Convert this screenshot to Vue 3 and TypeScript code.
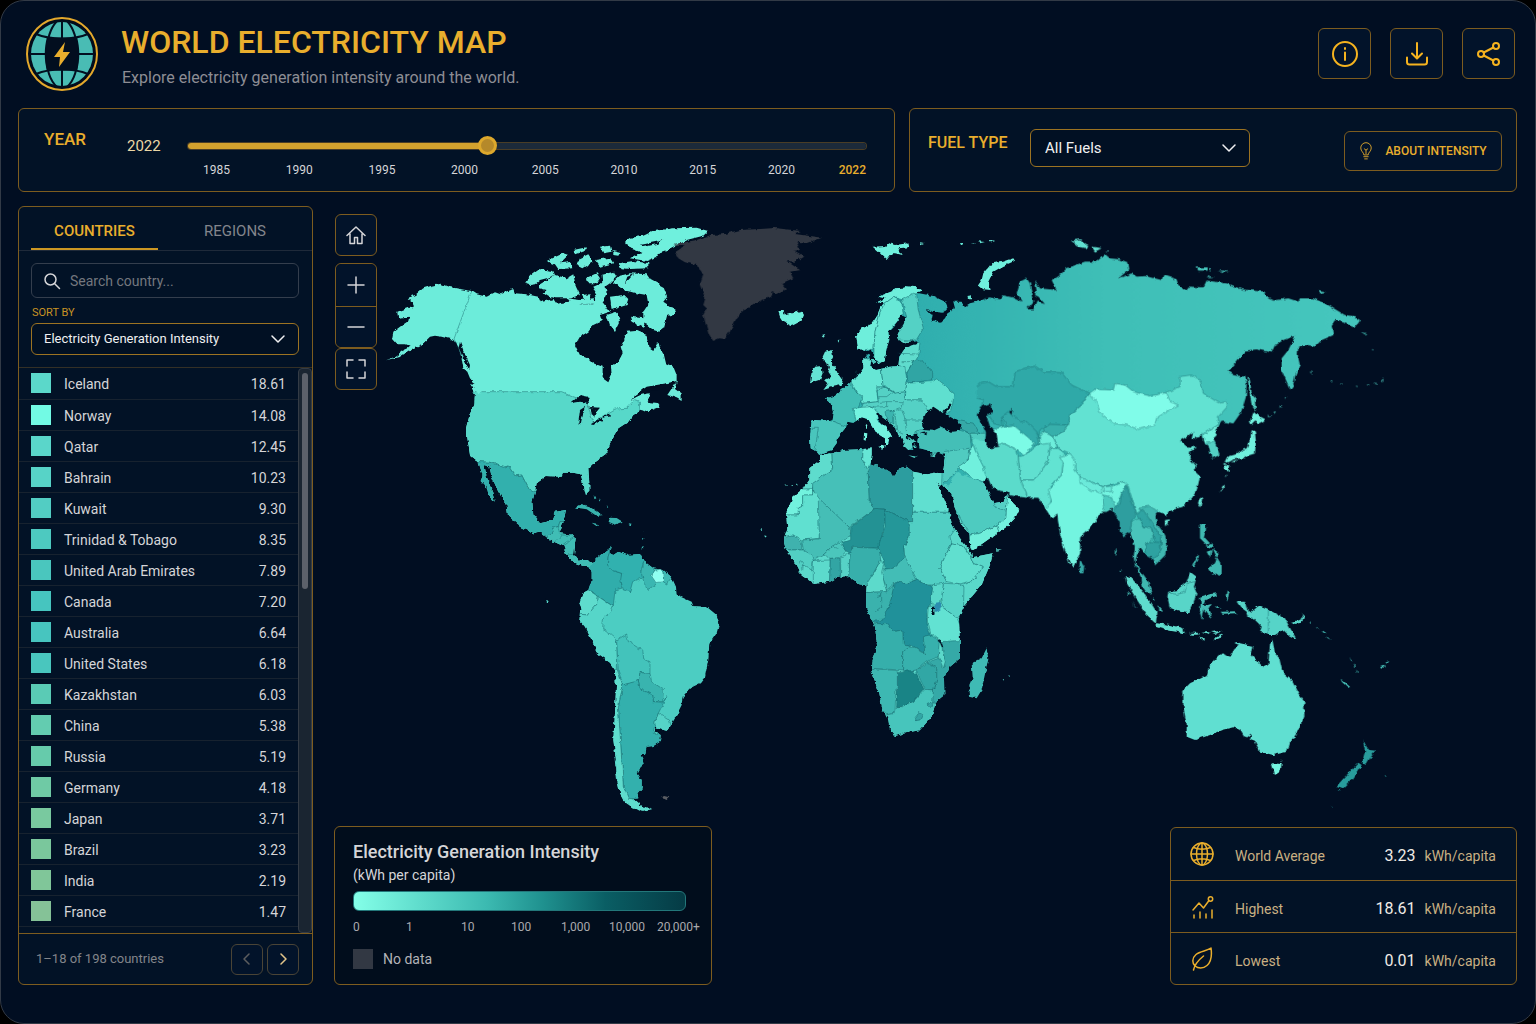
<script setup lang="ts">
import { computed, ref } from 'vue'

interface Country {
  name: string
  value: string
  color: string
}

/** [fill, outline] of one coloured area */
type Area = [string, string]

interface MapRegion {
  id: string
  x: number
  y: number
  land: string
  base: string
  areas: Area[]
  borders?: string
  islands: Area[]
  water?: string
}

const countries: Country[] = [
  { name: 'Iceland', value: '18.61', color: '#5bd8ca' },
  { name: 'Norway', value: '14.08', color: '#72fae4' },
  { name: 'Qatar', value: '12.45', color: '#5ad6ca' },
  { name: 'Bahrain', value: '10.23', color: '#57d3c7' },
  { name: 'Kuwait', value: '9.30', color: '#52cdc3' },
  { name: 'Trinidad & Tobago', value: '8.35', color: '#4dc9c0' },
  { name: 'United Arab Emirates', value: '7.89', color: '#4ac6be' },
  { name: 'Canada', value: '7.20', color: '#46c5bf' },
  { name: 'Australia', value: '6.64', color: '#47c5bf' },
  { name: 'United States', value: '6.18', color: '#49c6be' },
  { name: 'Kazakhstan', value: '6.03', color: '#5acbb5' },
  { name: 'China', value: '5.38', color: '#63ccb0' },
  { name: 'Russia', value: '5.19', color: '#66cbab' },
  { name: 'Germany', value: '4.18', color: '#6fcaa5' },
  { name: 'Japan', value: '3.71', color: '#79c99f' },
  { name: 'Brazil', value: '3.23', color: '#7ac79c' },
  { name: 'India', value: '2.19', color: '#80c699' },
  { name: 'France', value: '1.47', color: '#85c297' },
]

const years = [1985, 1990, 1995, 2000, 2005, 2010, 2015, 2020, 2022]
const scaleLabels = ['0', '1', '10', '100', '1,000', '10,000', '20,000+']

const position = ref(44)
const trackStyle = computed(() => ({ '--fill': `${position.value}%` }))
const fuel = ref('All Fuels')
const sortBy = ref('Electricity Generation Intensity')
const search = ref('')
const tab = ref('countries')

const regions: MapRegion[] = [
  {
    id: 'north-america',
    x: 380,
    y: 215,
    base: '#6cecda',
    land: 'M18,436L45,425 70,405 92,395 75,388 50,388 36,372 40,350 60,335 85,318 88,305 55,308 52,290 85,278 102,280 98,262 82,248 105,240 130,220 155,212 182,206 205,215 240,222 275,228 290,238 320,245 345,232 362,238 400,222 405,235 440,238 475,245 482,262 520,252 530,266 580,258 600,268 640,268 652,235 640,215 675,200 680,235 668,262 690,290 660,300 665,318 640,330 625,350 600,365 585,390 600,420 625,430 640,445 668,455 668,490 685,502 695,480 693,455 715,440 728,415 722,395 735,370 740,350 770,347 800,360 805,395 820,405 835,380 840,400 852,420 858,445 880,455 890,480 890,498 860,505 800,515 760,545 780,540 810,535 800,560 835,565 842,575 800,592 785,585 760,600 745,620 715,640 700,665 692,680 680,715 645,740 625,760 628,805 628,830 618,840 608,800 602,778 580,773 550,773 545,785 500,783 470,805 465,830 457,860 460,900 480,925 515,917 525,890 558,885 550,920 538,955 580,960 587,970 582,1020 595,1037 625,1035 645,1047 640,1058 615,1055 585,1043 560,1020 550,993 510,975 480,950 460,955 420,935 385,905 380,870 355,830 335,785 328,753 313,750 320,785 335,825 345,863 325,840 320,815 302,795 308,780 295,740 270,720 263,675 258,640 268,600 283,570 285,535 275,520 290,515 270,490 262,470 250,460 245,430 235,395 220,375 185,365 165,362 150,365 130,385 100,400 60,425Z',
    areas: [
      ['#57d8c9', 'M200,530L545,530 580,545 620,560 640,625 665,605 705,582 740,580 765,553 778,558 780,590 850,600 700,860 600,850 465,830 445,820 425,780 405,783 385,753 370,757 330,742 295,740 200,740Z'],
      ['#32b0ad', 'M295,740L330,742 370,757 385,753 405,783 425,780 445,820 465,830 600,870 600,920 540,920 535,935 515,940 520,950 500,970 480,1000 200,1000 200,740Z'],
      ['#40bdb5', 'M540,920L535,935 515,940 520,950 500,970 500,1100 700,1100 600,920Z'],
    ],
    borders: 'M275,228L222,372 250,430M525,980L545,960 580,962M550,990L585,965M562,1020L582,1018M535,940L538,955',
    islands: [
      ['#6cecda', 'M435,205L450,180 475,162 520,168 525,180 500,190 480,195 465,208 450,210ZM480,208L525,180 560,190 580,178 588,215 600,240 570,250 530,250 505,245 490,235 500,225 480,220ZM620,188L650,175 660,190 650,205 625,205ZM500,138L550,115 565,120 540,145 575,140 580,160 535,162 525,148ZM580,105L620,97 620,105 585,118ZM600,130L625,118 640,140 610,160 590,150ZM660,95L690,92 695,110 670,115ZM645,135L690,128 700,145 660,155ZM700,105L722,110 715,122 700,120ZM715,145L760,138 805,145 805,160 750,162 725,160Z'],
      ['#6ff0dd', 'M735,80L750,68 790,62 820,48 880,40 950,38 985,48 970,62 920,75 890,90 860,105 840,112 830,125 800,138 750,130 770,118 790,115 765,105 745,98Z'],
      ['#6cecda', 'M700,200L720,182 750,175 800,178 812,195 850,215 862,245 850,260 888,285 880,300 862,302 852,340 838,350 820,345 790,320 790,290 805,268 800,240 770,235 755,230 730,225ZM665,180L700,170 710,185 690,205 668,220ZM690,245L730,240 745,255 740,270 710,280 695,285ZM680,300L710,290 720,318 705,348 690,330ZM750,305L790,310 795,340 755,320ZM862,540L890,498 885,520 905,535 905,558 890,550ZM270,505L290,508 302,530 296,538ZM248,440L262,450 258,470ZM605,240L632,238 628,255 612,252ZM560,250L600,255 640,250 645,266 580,268ZM640,225L662,205 672,235 655,250Z'],
    ],
    water: 'M572,565L600,540 625,545 630,565 600,560ZM595,625L600,585 615,575 608,600 602,628ZM620,575L660,578 650,590 645,610 635,600 632,580ZM632,628L665,608 668,614 640,630ZM665,605L695,597 690,604 670,608ZM752,555L790,522 850,512 860,520 800,530 765,548ZM735,205L742,185 760,178 748,192ZM780,90L830,80 850,72 835,86 790,96ZM236,398L240,380 256,420 270,450 268,465 250,430Z',
  },
  {
    id: 'south-america',
    x: 440,
    y: 440,
    base: '#4ccdc2',
    land: 'M450,385L460,365 475,350 490,338 515,320 510,340 520,345 535,335 560,345 600,342 610,362 640,385 670,390 695,412 708,440 710,465 755,485 760,498 800,500 830,525 838,550 830,580 808,612 805,660 795,710 780,730 750,745 728,770 725,795 705,835 690,860 680,872 650,865 645,850 645,875 662,885 660,905 640,918 620,920 615,945 600,945 610,965 592,1000 605,1020 605,1045 592,1060 595,1075 580,1078 600,1095 632,1108 610,1115 580,1105 555,1085 540,1060 530,1010 528,960 520,900 525,820 528,740 525,690 510,668 470,640 460,610 435,560 418,540 420,515 425,505 418,490 428,460 445,450 455,420 455,400Z',
    areas: [
      ['#30adab', 'M400,300L515,300 505,350 502,375 520,392 545,400 545,445 525,450 520,500 470,465 445,450 400,450Z'],
      ['#31b1af', 'M515,310L505,350 502,375 520,392 545,400 542,420 550,450 570,455 578,425 610,412 605,385 612,365 615,330Z'],
      ['#3ab6b1', 'M612,362L605,400 612,430 625,448 650,432 640,395 645,370Z'],
      ['#3fbbb4', 'M668,380L700,405 680,432 670,425Z'],
      ['#8ffff0', 'M640,392L668,385 670,425 648,428 636,410Z'],
      ['#5fdccd', 'M400,450L445,450 472,468 470,490 440,525 400,520Z'],
      ['#56d6c9', 'M472,468L520,500 515,512 490,535 488,565 515,585 530,600 532,660 532,690 400,690 400,520 440,525 470,490Z'],
      ['#43c3bb', 'M530,600L560,582 565,605 605,630 608,655 630,665 630,700 600,698 595,722 580,728 548,735 535,690 532,640Z'],
      ['#39b4af', 'M595,722L600,698 630,700 635,725 670,748 668,785 640,785 638,765 600,745Z'],
      ['#33b0ad', 'M548,735L595,722 600,745 638,765 640,785 668,787 680,770 655,820 645,850 700,900 700,1000 620,1080 565,1075 550,1040 545,960 540,880 535,800Z'],
      ['#5fdccd', 'M532,690L548,735 535,800 540,880 545,960 550,1040 565,1075 640,1085 640,1120 500,1120 500,690Z'],
      ['#55d3c7', 'M655,820L688,840 700,880 640,880 645,850Z'],
    ],
    islands: [
      ['#38b3ae', 'M403,205L425,192 450,200 490,225 470,228 440,208 410,203ZM510,233L530,234 548,245 520,255 505,248ZM455,248L475,252 468,257ZM560,249L575,251 572,256ZM461,165L466,175 463,178ZM478,175L484,183 480,184ZM497,198L505,202 500,204ZM606,270L610,276 607,280ZM609,292L613,296 610,300ZM606,320L610,326 604,330Z'],
      ['#56d6c9', 'M318,478L326,484 322,489ZM524,955L532,975 526,980ZM526,1000L534,1015 528,1018ZM548,1072L558,1082 550,1084ZM630,1103L640,1107 632,1110Z'],
      ['#5a5d63', 'M662,1075L672,1068 688,1072 680,1080 672,1076Z'],
      ['#4ccdc2', 'M706,462L722,468 716,484 704,478Z'],
    ],
  },
  {
    id: 'greenland',
    x: 440,
    y: 215,
    base: '#323843',
    land: 'M705,112L735,92 700,88 770,75 810,60 850,58 900,45 960,42 1005,39 1083,48 1060,56 1146,68 1104,84 1070,80 1080,105 1060,108 1090,125 1065,140 1040,138 1080,165 1050,170 1060,190 1026,205 1040,222 1010,235 1000,228 990,246 945,264 906,290 890,310 880,330 870,350 855,372 838,370 820,378 805,355 798,330 790,300 800,280 790,270 796,250 780,210 790,180 770,150 735,142 715,130Z',
    areas: [],
    islands: [],
  },
  {
    id: 'africa',
    x: 760,
    y: 440,
    base: '#5bd9cb',
    land: 'M180,45L215,40 250,30 300,28 335,25 335,45 332,70 360,80 405,108 415,85 440,80 460,95 500,103 525,98 548,100 550,125 542,140 528,122 545,160 568,215 575,250 600,295 628,330 638,352 698,340 690,375 665,435 610,500 597,535 600,620 600,655 565,685 552,715 553,765 528,785 515,830 480,870 440,878 405,888 390,870 385,840 368,810 358,760 333,690 335,660 352,620 345,560 318,505 318,470 320,435 290,432 270,408 235,410 210,425 160,432 120,400 95,350 78,330 70,300 82,265 78,220 100,170 130,145 148,120 148,85 180,60ZM556,35L640,40 672,130 690,165 700,190 730,185 742,162 760,190 778,208 765,235 740,260 690,295 640,330 632,325 628,285 605,255 590,220 575,165 550,135 548,110Z',
    areas: [
      ['#5edccd', 'M140,40L215,30 218,88 160,130 158,147 100,150 100,100Z'],
      ['#72f2de', 'M60,147L158,147 158,165 128,165 128,200 115,205 115,225 60,225Z'],
      ['#46c0b8', 'M215,20L310,20 308,60 325,95 328,185 345,205 268,262 175,180 158,150 158,130 218,88Z'],
      ['#66e6d5', 'M310,20L345,20 345,60 325,95 308,60Z'],
      ['#2c9d9f', 'M325,95L332,70 350,60 458,60 458,245 445,245 375,208 345,205 328,185Z'],
      ['#60dfd0', 'M458,60L560,90 560,135 600,217 458,217Z'],
      ['#60e0d0', 'M60,225L115,225 115,205 128,200 128,165 158,165 158,150 185,185 178,295 125,300 100,285 60,300Z'],
      ['#45beb6', 'M175,183L185,183 268,262 272,285 240,310 215,320 190,345 160,362 130,330 125,300 178,297Z'],
      ['#239294', 'M272,262L345,205 375,208 375,240 358,325 280,322 270,340 245,325 248,308 272,300Z'],
      ['#249799', 'M375,208L448,245 448,290 432,320 435,350 400,385 375,388 372,360 358,335 358,310 375,260Z'],
      ['#51cfc4', 'M458,217L600,217 590,270 575,310 555,350 540,385 560,425 540,435 505,435 465,415 435,370 432,320 448,290 448,245 458,245Z'],
      ['#5ad9ca', 'M590,262L645,340 632,350 610,318 575,312 570,290Z'],
      ['#60dfcf', 'M575,312L610,318 632,350 640,370 670,382 640,420 600,432 560,425 540,385 555,350Z'],
      ['#5ad8ca', 'M632,350L720,330 700,450 600,530 610,432 640,420 670,382 640,370Z'],
      ['#56d3c7', 'M550,430L600,432 612,440 610,520 590,535 548,500 545,470Z'],
      ['#5ad8ca', 'M515,435L550,430 545,470 540,495 512,495Z'],
      ['#20919a', 'M400,435L410,425 440,430 470,418 505,435 518,440 512,490 500,510 502,560 512,585 490,600 495,640 465,622 430,610 428,570 400,575 385,555 345,550 335,540 370,535 390,490Z'],
      ['#62e2d2', 'M505,500L545,500 592,535 620,610 580,622 545,605 512,580 502,540Z'],
      ['#43bdb6', 'M372,388L400,385 435,350 470,418 440,430 410,425 380,450 368,410Z'],
      ['#5cdacb', 'M362,360L372,370 365,400 380,455 310,458 310,430 340,400Z'],
      ['#37afab', 'M280,322L358,325 362,360 340,400 315,440 285,440 265,410 270,340Z'],
      ['#32a5a4', 'M210,355L240,355 242,430 208,435Z'],
      ['#56d2c6', 'M242,352L270,340 265,420 242,420Z'],
      ['#5cdacc', 'M160,362L210,360 208,440 160,440Z'],
      ['#4bc6bc', 'M190,345L215,320 238,305 258,335 240,352 210,355Z'],
      ['#3fb2ae', 'M60,290L100,285 125,310 125,330 60,330Z'],
      ['#52cfc3', 'M60,330L130,330 155,345 160,362 155,390 130,375 115,400 80,380Z'],
      ['#3ab2ad', 'M310,458L380,455 385,450 402,435 390,490 370,540 330,545 300,500Z'],
      ['#36afab', 'M320,550L385,552 400,575 428,570 430,612 448,615 448,630 428,635 428,690 320,685Z'],
      ['#37b1ad', 'M428,635L448,622 465,622 495,642 490,590 512,585 540,605 535,650 500,665 470,690 440,695 428,690Z'],
      ['#35a9a7', 'M545,605L620,600 610,680 570,720 560,790 515,785 520,750 530,720 530,680 500,668 535,655 555,680Z'],
      ['#5bd8ca', 'M538,600L546,625 556,665 550,685 535,650Z'],
      ['#31a7a5', 'M468,692L500,670 530,680 530,720 520,750 495,748Z'],
      ['#198486', 'M412,695L455,692 468,700 492,748 460,785 425,800 410,800 412,745Z'],
      ['#3db8b2', 'M320,685L412,692 412,745 408,745 405,820 385,825 350,800Z'],
      ['#47c5bc', 'M375,825L405,820 410,800 425,800 460,785 495,748 520,750 518,790 600,780 500,900 380,900Z'],
      ['#32a5a4', 'M466,832L478,818 488,824 480,840 468,842ZM505,790L516,786 518,802 506,802Z'],
      ['#4ecbc0', 'M548,30L660,60 690,165 742,170 738,235 710,255 660,280 630,285 545,140Z'],
      ['#70efdb', 'M630,285L660,280 710,255 720,285 640,345 620,330Z'],
      ['#72f2df', 'M742,155L738,235 710,255 720,285 800,260 790,170Z'],
      ['#55d0c5', 'M700,185L744,165 738,210 710,205Z'],
    ],
    borders: 'M345,470L365,465 365,500 345,515M365,465L368,458M215,320L235,325M112,372L122,362 130,372 128,392M568,75L572,100 555,130',
    islands: [
      ['#3fbab4', 'M680,625L685,655 665,750 650,775 630,770 628,735 638,710 635,670 665,655Z'],
      ['#5bd9cb', 'M72,135L80,133 80,137ZM92,138L99,135 99,140ZM108,134L112,128 112,138ZM0,270L6,268 6,273ZM10,290L15,286 17,293ZM728,718L732,718 732,722ZM745,706L750,707 748,711ZM710,328L726,328 712,332Z'],
      ['#2b8db0', 'M522,500L530,488 545,486 542,508 526,516Z'],
    ],
    water: 'M516,500L522,500 524,524 518,522ZM536,598L542,600 550,622 546,622Z',
  },
  {
    id: 'europe',
    x: 770,
    y: 220,
    base: 'url(#russia-west)',
    land: 'M318,248L345,235 325,230 370,212 375,205 405,203 400,198 440,202 455,212 440,218 490,228 525,245 532,262 520,278 490,275 470,266 488,285 485,300 510,308 525,295 535,275 555,265 550,245 575,245 580,262 600,250 640,240 660,590 650,640 650,680 650,770 640,790 610,778 560,755 535,800 520,790 520,760 525,745 530,700 520,700 505,695 490,702 470,690 450,685 445,665 448,650 440,640 425,645 412,645 410,655 425,665 430,690 415,690 405,680 395,655 380,640 375,620 355,605 335,590 325,578 318,580 325,600 345,620 365,645 370,655 358,650 355,668 345,675 345,655 320,640 305,615 295,598 275,592 262,600 250,608 232,605 228,622 205,650 200,670 185,690 160,698 148,705 140,695 122,685 120,650 125,600 135,600 180,603 188,600 192,575 185,550 165,535 195,528 205,520 240,490 258,470 268,462 280,445 280,415 300,402 303,425 300,440 318,450 360,440 385,438 388,410 405,385 440,372 445,360 400,368 385,358 382,335 400,315 410,290 395,283 385,300 372,318 355,335 358,360 350,385 345,420 325,432 312,410 302,388 285,395 265,385 258,345 275,325 305,312 320,290 330,265 345,245Z',
    areas: [
      ['#6eeedb', 'M240,400L300,390 312,385 315,335 330,280 345,250 370,232 400,240 440,222 460,215 440,190 300,190Z'],
      ['#67e8d6', 'M312,385L315,335 330,280 345,250 370,232 395,245 400,285 360,330 360,440 312,440Z'],
      ['#54d1c5', 'M395,240L430,220 440,222 445,270 460,325 440,358 380,375 375,320 410,290Z'],
      ['#5fdccd', 'M380,360L450,365 445,415 430,425 410,455 380,445 380,400Z'],
      ['#66e6d5', 'M240,395L332,430 340,500 320,515 325,545 275,550 262,520 240,500 220,480Z'],
      ['#5bd8ca', 'M332,430L405,440 412,490 405,515 375,520 340,500Z'],
      ['#30a5a4', 'M410,460L430,425 460,422 485,455 485,480 415,490Z'],
      ['#5fdfcf', 'M410,490L485,485 500,478 552,520 545,575 500,580 470,580 455,540 405,540Z'],
      ['#41beb6', 'M150,500L240,480 262,520 278,530 265,560 270,600 230,625 185,603 150,560Z'],
      ['#49c5bc', 'M110,590L185,603 232,620 200,710 110,710Z'],
      ['#54d1c5', 'M320,500L340,500 375,520 405,515 405,540 455,540 475,570 460,645 400,710 380,660 325,590 300,560 270,575 280,550 325,545Z'],
      ['#3bb4af', 'M345,575L370,570 372,612 350,600Z'],
      ['#73f3df', 'M250,565L300,560 322,572 322,600 390,660 345,710 262,620Z'],
      ['#44bfb7', 'M435,635L480,620 560,628 600,640 605,690 540,710 430,710Z'],
      ['#35a9a7', 'M555,600L610,610 630,640 600,640 575,628Z'],
      ['#4ecbc0', 'M600,640L630,640 660,640 650,670 605,660Z'],
      ['#50cbc0', 'M520,695L600,685 595,720 560,755 510,800Z'],
      ['#70f0dd', 'M600,690L612,670 650,700 660,790 610,778 565,740 595,720Z'],
      ['#5bdbcb', 'M605,660L645,665 680,700 650,770 640,740 615,690Z'],
    ],
    borders: 'M125,625L145,625 135,690M385,400L445,402M395,425L430,425M315,515L345,500 370,515 350,530 325,530M325,548L350,545 350,560 300,562M350,545L400,545 395,565 360,575M395,565L405,600 455,600M405,600L410,640M375,580L380,630 400,640M240,490L262,520M262,455L255,480',
    islands: [
      ['#6ff0dd', 'M25,275L40,270 45,285 70,278 95,272 102,285 95,302 65,318 40,305 30,290Z'],
      ['#64e4d4', 'M165,395L185,390 190,410 182,425 195,440 205,465 220,475 215,495 190,500 160,510 175,490 165,480 185,470 175,455 180,440 165,430 158,410ZM125,455L135,440 155,438 158,460 150,480 120,490ZM155,345L166,342 160,350ZM203,362L208,358 206,368Z'],
      ['#6ff0dd', 'M308,80L345,78 355,70 375,75 415,70 418,82 385,85 398,105 375,100 365,100 350,120 330,100ZM450,70L462,72 452,76Z'],
      ['#6ff0dd', 'M625,195L635,180 640,160 665,130 700,125 730,115 735,122 700,138 670,155 655,185 662,210 640,208Z'],
      ['#62e2d2', 'M570,66L582,66 574,74ZM605,69L618,67 610,72ZM625,64L645,66 630,70ZM655,60L678,62 660,68ZM592,228L606,226 606,238 594,238Z'],
      ['#73f3df', 'M325,680L345,675 340,690ZM282,638L292,640 290,662 281,660ZM287,614L292,618 289,632Z'],
      ['#4cc8be', 'M412,706L440,710 430,714ZM480,706L500,698 494,709ZM300,420L318,420 312,432ZM415,650L440,665 425,668ZM432,672L440,680 434,684Z'],
    ],
    water: 'M455,605L470,575 490,560 505,570 515,580 540,550 545,555 525,580 560,600 572,615 570,632 545,635 515,620 490,632 460,630ZM450,640L472,637 468,644Z',
  },
  {
    id: 'asia',
    x: 1000,
    y: 230,
    base: 'url(#russia-east)',
    land: 'M-70,220L-50,210 -35,202 0,208 10,196 40,203 65,215 50,190 60,155 80,145 90,160 95,195 100,215 80,238 100,238 110,215 135,222 115,200 105,195 110,180 105,150 120,175 170,180 155,150 185,130 200,115 255,95 290,95 315,72 330,85 360,88 385,98 388,118 355,145 395,130 410,140 440,138 485,150 490,135 530,148 535,165 560,182 565,170 610,172 620,152 680,160 725,178 790,185 805,205 820,212 865,205 895,215 900,205 940,205 985,225 1035,255 1060,258 1080,270 1065,292 1035,280 1005,270 995,285 1000,315 965,330 945,350 925,345 895,352 893,375 900,405 885,440 880,465 870,478 860,455 845,420 845,385 865,360 885,320 878,320 850,330 825,345 815,368 770,358 735,362 710,395 685,425 700,435 735,440 740,455 738,500 725,545 700,580 665,575 655,590 645,600 650,615 640,625 650,650 658,675 635,685 630,660 625,645 615,640 608,615 590,620 575,630 580,605 560,620 540,632 560,650 590,652 570,665 568,685 590,710 580,720 600,740 590,780 575,805 545,830 505,845 500,855 475,845 465,855 470,880 495,915 502,945 495,975 465,1005 463,990 440,975 420,950 412,970 405,995 420,1020 445,1055 455,1090 440,1088 425,1065 420,1030 405,1005 402,980 405,950 390,905 370,918 360,905 360,880 345,850 335,835 320,845 305,845 295,860 270,895 240,922 240,970 220,1010 210,1000 195,960 180,910 172,850 155,865 140,840 130,825 115,803 75,803 30,795 20,785 0,782 -25,770 -35,745 -42,742 -50,710 -75,660 -85,630 -75,625 -45,635 -45,600 -60,565 -70,540Z',
    areas: [
      ['#62e2d2', 'M268,490L400,540 500,488 540,470 540,440 575,435 600,450 610,490 655,518 680,512 682,530 655,560 655,585 610,612 640,700 640,900 480,890 440,830 410,850 385,770 370,755 310,770 245,745 225,720 210,670 175,655 160,620 190,605 205,585 210,555 245,525Z'],
      ['#80fce9', 'M268,490L285,478 340,480 345,460 375,465 400,485 450,498 500,488 510,515 535,525 500,545 475,560 465,585 415,598 380,585 340,580 300,548 292,520Z'],
      ['#2fa9a8', 'M-80,480L-60,460 -35,455 -10,470 40,470 45,425 75,415 105,408 130,425 185,428 215,465 268,490 245,525 210,555 205,585 175,590 135,588 120,600 110,640 60,590 30,550 5,560 10,590 -20,580 -30,560 -60,545 -50,510 -80,500Z'],
      ['#32abaa', 'M5,560L25,545 60,575 80,575 110,605 120,640 105,650 60,610 20,590Z'],
      ['#7cfbe6', 'M-25,600L10,590 40,585 70,610 105,640 85,660 75,678 50,660 10,640 -20,650Z'],
      ['#37afab', 'M130,595L150,583 205,585 190,605 160,620 135,610Z'],
      ['#6deedb', 'M118,620L130,605 160,620 172,652 150,655 120,645Z'],
      ['#5bdbcb', 'M-85,630L-70,600 -30,650 10,640 50,660 55,680 60,740 80,790 75,820 -60,820 -60,745 -42,742 -50,710 -75,660Z'],
      ['#60e0d0', 'M55,680L75,675 110,645 150,640 150,655 145,690 120,730 100,750 62,750Z'],
      ['#62e3d2', 'M62,750L100,750 120,730 145,690 150,655 175,655 200,675 190,700 185,735 150,770 155,810 140,850 80,850 80,790Z'],
      ['#73f4e0', 'M210,670L225,690 225,720 245,745 305,770 340,770 370,755 385,770 365,790 345,840 300,860 300,1050 150,1050 130,840 155,815 145,780 185,735 190,700 180,680Z'],
      ['#6beada', 'M240,740L305,770 305,790 270,780 240,760ZM312,770L335,768 335,785 312,785Z'],
      ['#4ccabf', 'M308,795L335,800 345,830 340,850 312,850Z'],
      ['#2e9e9f', 'M380,765L390,800 410,850 395,872 390,920 370,940 340,900 340,840 360,820 365,790Z'],
      ['#49c4bb', 'M395,875L420,865 430,890 455,890 460,925 440,940 440,960 410,990 405,1020 380,1000 390,910Z'],
      ['#40b8b1', 'M415,835L450,828 475,845 520,870 520,1020 450,1020 460,985 485,960 482,920 450,870Z'],
      ['#2fa4a3', 'M410,855L430,840 450,870 482,920 482,940 465,940 455,895 430,890 420,865Z'],
      ['#2ea2a1', 'M437,945L450,935 482,938 482,965 460,985 440,978Z'],
      ['#3fb8b1', 'M395,1015L440,1015 470,1100 400,1100Z'],
      ['#73f2df', 'M610,612L630,600 655,585 670,600 645,638 612,642Z'],
      ['#53d0c4', 'M615,640L645,636 670,690 620,690Z'],
    ],
    islands: [
      ['#56d5c8', 'M742,440L750,450 755,490 770,505 765,515 768,545 755,525 748,480Z'],
      ['#70f0dd', 'M760,545L775,558 798,570 780,580 765,575 755,585 750,575ZM755,600L765,605 768,640 765,670 740,678 730,685 700,688 690,695 675,700 685,680 710,672 725,660 740,655 750,630ZM670,702L688,705 685,725 675,720ZM694,694L710,690 706,698ZM678,735L682,735 680,742ZM670,762L675,768 660,788Z'],
      ['#66e6d5', 'M600,800L607,805 602,832 594,820ZM495,870L510,868 505,882 495,888Z'],
      ['#60dfd0', 'M213,32L240,28 265,45 260,55 235,50ZM275,50L305,55 285,65ZM318,64L326,66 320,68Z'],
      ['#45c3ba', 'M590,112L620,112 620,122 595,122ZM625,114L636,116 630,122ZM655,120L690,125 670,127ZM620,138L642,144 625,144ZM955,180L980,185 960,190ZM1086,307L1100,309 1094,313Z'],
      ['#50ccc1', 'M855,498L858,500 855,508ZM840,525L844,528 838,534ZM822,545L828,545 822,552ZM808,556L814,558 806,562ZM930,424L936,428 932,430ZM992,452L998,455 994,457ZM1020,460L1026,462 1022,464ZM1068,470L1074,472 1070,474ZM1100,464L1110,464 1104,467ZM1125,458L1132,460 1126,463ZM1145,450L1152,446 1148,454ZM1116,357L1121,359 1118,362Z'],
      ['#35a9a7', 'M240,992L253,1010 250,1030 240,1030 238,1010Z'],
    ],
    water: 'M-70,555L-55,530 -30,520 -22,545 -40,560 -30,590 -10,610 -5,650 -30,655 -45,635 -42,610 -55,580ZM28,545L38,532 34,555Z',
  },
  {
    id: 'oceania',
    x: 1040,
    y: 400,
    base: '#60dfd1',
    land: 'M430,870L450,850 500,825 510,795 530,775 545,760 570,770 585,745 600,730 640,738 635,765 670,802 685,795 690,730 697,718 705,760 718,775 728,818 755,840 775,880 793,905 793,950 770,1000 750,1030 742,1055 700,1065 660,1055 645,1025 630,1020 635,1000 615,1015 600,990 580,982 545,990 510,1005 465,1020 440,1010 440,975 430,920Z',
    areas: [],
    islands: [
      ['#5fdccd', 'M255,530L275,535 310,575 340,620 352,640 348,668 320,645 285,590 260,550ZM350,670L390,675 430,685 435,700 390,692 350,682ZM450,698L478,698 478,704 450,704ZM485,698L505,696 503,704ZM510,696L545,692 525,702ZM520,722L535,705 550,700 540,714ZM478,712L495,718 490,722Z'],
      ['#58d5c8', 'M385,575L410,570 440,545 450,515 470,530 462,560 470,580 460,610 445,640 420,635 390,625 382,590Z'],
      ['#45beb6', 'M480,590L500,584 530,580 530,588 495,600 490,618 515,612 505,630 518,655 500,640 492,628 487,660 480,640 482,610ZM560,570L567,580 562,605 557,590ZM545,635L585,634 590,640 550,641ZM525,618L545,622 530,624Z'],
      ['#3fb9b2', 'M480,372L497,372 498,390 492,410 510,430 500,435 480,415ZM503,505L525,490 530,470 545,495 545,520 535,530 508,512ZM500,455L515,450 510,475ZM518,445L537,460 530,472ZM455,500L475,465 480,470 460,502ZM496,438L520,430 515,444Z'],
      ['#56d4c8', 'M590,605L615,605 620,625 635,635 655,618 685,630 700,635 735,655 748,680 770,718 745,705 730,690 705,705 685,705 660,695 665,680 640,655 625,650 620,635 600,620ZM750,665L780,660 790,645 785,635 794,648 784,668 765,672ZM583,730L600,728 598,735Z'],
      ['#45beb6', 'M808,662L818,672 812,672ZM825,680L838,688 830,688ZM845,690L860,700 850,698ZM860,708L872,720 862,714ZM930,770L938,785 932,780ZM942,790L948,800 943,800ZM950,808L953,820 949,816ZM903,836L930,860 925,864 905,845ZM1020,798L1032,794 1034,802 1024,803ZM1036,785L1048,780 1042,788ZM228,440L232,460 227,472ZM240,510L243,516 239,516ZM262,575L270,582 264,584ZM278,605L290,625 284,618ZM355,615L370,632 358,630ZM338,590L344,602 337,600Z'],
      ['#74f4e0', 'M695,1090L725,1092 720,1115 705,1125ZM722,1078L727,1084 722,1086Z'],
      ['#289c9c', 'M968,1018L980,1040 988,1050 1008,1052 990,1075 978,1095 965,1088 975,1055ZM955,1088L965,1095 940,1135 910,1165 890,1158 920,1125ZM895,1168L902,1166 896,1172ZM1035,1125L1040,1127 1036,1129ZM873,1217L878,1219 874,1221Z'],
    ],
    borders: 'M685,630L685,705M390,580L410,583 435,578 440,550 465,545',
  },
]
</script>

<template>
  <div class="app">
    <header class="header">
      <svg class="logo" viewBox="0 0 72 74" aria-hidden="true">
        <ellipse cx="36" cy="37" rx="35" ry="36" fill="#020c1b" stroke="#e3a82c" stroke-width="2" />
        <ellipse cx="36" cy="37" rx="31" ry="32" fill="#49bcb4" />
        <g fill="none" stroke="#020f20" stroke-width="2">
          <path d="M36 4v66M4 37h64M10 17c14 6 38 6 52 0M10 57c14-6 38-6 52 0" />
          <path d="M31 4C18 18 16 56 31 70M41 4c13 14 15 52 0 66" />
        </g>
        <path d="M21 20c9 1 21 1 30 0 3 11 3 23 0 34-9-1-21-1-30 0-3-11-3-23 0-34z" fill="#020e1f" />
        <path d="M39 25 28 40h6l-1 10 11-15h-7z" fill="#e9ae2d" />
      </svg>
      <div class="heading">
        <h1>WORLD ELECTRICITY MAP</h1>
        <p>Explore electricity generation intensity around the world.</p>
      </div>
      <nav class="actions" aria-label="Page actions">
        <button type="button" aria-label="Information">
          <svg viewBox="0 0 28 28"><circle cx="14" cy="14" r="12" /><path d="M14 12.5v7.5M14 8v1" /></svg>
        </button>
        <button type="button" aria-label="Download">
          <svg viewBox="0 0 28 28"><path d="M14 3v15M9 13.5l5 5 5-5M4 17.5V22a2.5 2.5 0 0 0 2.5 2.5h15A2.5 2.5 0 0 0 24 22v-4.5" /></svg>
        </button>
        <button type="button" aria-label="Share">
          <svg viewBox="0 0 28 28"><circle cx="6" cy="14" r="3" /><circle cx="21" cy="6" r="3" /><circle cx="21" cy="22" r="3" /><path d="M8.7 12.5 18.4 7.500M8.700 15.500l9.700 5" /></svg>
        </button>
      </nav>
    </header>

    <section class="filters">
      <div class="panel year-panel">
        <label class="caption" for="year">YEAR</label>
        <output class="year-value" for="year">2022</output>
        <div class="timeline">
          <input id="year" v-model.number="position" type="range" min="0" max="100" :style="trackStyle" />
          <div class="ticks">
            <span v-for="y in years" :key="y" :class="{ current: y === 2022 }">{{ y }}</span>
          </div>
        </div>
      </div>
      <div class="panel fuel-panel">
        <label class="caption" for="fuel">FUEL TYPE</label>
        <div class="select fuel-select">
          <select id="fuel" v-model="fuel">
            <option>All Fuels</option>
          </select>
          <svg viewBox="0 0 16 16" aria-hidden="true"><path d="M2 5l6 6 6-6" /></svg>
        </div>
        <button type="button" class="about">
          <svg viewBox="0 0 16 20" aria-hidden="true"><path d="M5.5 14c0-2.500-3.500-3.500-3.500-7.500a6 6 0 0 1 12 0c0 4-3.500 5-3.500 7.500zM5.500 16.500h5M6.500 19h3M8 13V9M6 7.500 8 9l2-1.500" /></svg>
          ABOUT INTENSITY
        </button>
      </div>
    </section>

    <main class="content">
      <aside class="panel sidebar">
        <div class="tabs" role="tablist">
          <button type="button" role="tab" :class="{ active: tab === 'countries' }" @click="tab = 'countries'">COUNTRIES</button>
          <button type="button" role="tab" :class="{ active: tab === 'regions' }" @click="tab = 'regions'">REGIONS</button>
        </div>
        <div class="tools">
          <div class="search">
            <svg viewBox="0 0 18 18" aria-hidden="true"><circle cx="7.5" cy="7.5" r="5.5" /><path d="m11.5 11.5 5 5" /></svg>
            <input v-model="search" type="search" placeholder="Search country..." aria-label="Search country" />
          </div>
          <label class="sort-label" for="sort">SORT BY</label>
          <div class="select sort-select">
            <select id="sort" v-model="sortBy">
              <option>Electricity Generation Intensity</option>
            </select>
            <svg viewBox="0 0 16 16" aria-hidden="true"><path d="M2 5l6 6 6-6" /></svg>
          </div>
        </div>
        <div class="list">
          <table>
            <tbody>
              <tr v-for="c in countries" :key="c.name">
                <td class="key"><i :style="{ background: c.color }"></i></td>
                <th scope="row">{{ c.name }}</th>
                <td class="num">{{ c.value }}</td>
              </tr>
            </tbody>
          </table>
          <div class="scrollbar"><i></i></div>
        </div>
        <footer class="pager">
          <span>1–18 of 198 countries</span>
          <button type="button" aria-label="Previous page" disabled>
            <svg viewBox="0 0 12 12"><path d="M8 1 3 6l5 5" /></svg>
          </button>
          <button type="button" aria-label="Next page">
            <svg viewBox="0 0 12 12"><path d="m4 1 5 5-5 5" /></svg>
          </button>
        </footer>
      </aside>

      <section class="stage" aria-label="World map">
        <svg class="map" viewBox="327 206 1190 779" role="img" aria-label="Electricity generation intensity by country">
          <defs>
            <linearGradient id="russia-west" gradientUnits="userSpaceOnUse" x1="440" y1="0" x2="1690" y2="0">
              <stop offset="0" stop-color="#2faeae" />
              <stop offset=".45" stop-color="#3fbfb7" />
              <stop offset="1" stop-color="#45c6bd" />
            </linearGradient>
            <linearGradient id="russia-east" gradientUnits="userSpaceOnUse" x1="-250" y1="0" x2="1000" y2="0">
              <stop offset="0" stop-color="#2faeae" />
              <stop offset=".45" stop-color="#3fbfb7" />
              <stop offset="1" stop-color="#45c6bd" />
            </linearGradient>
            <filter id="coast" filterUnits="userSpaceOnUse" color-interpolation-filters="sRGB" x="327" y="206" width="1190" height="779">
              <feTurbulence type="fractalNoise" baseFrequency=".2" numOctaves="2" seed="4" />
              <feDisplacementMap in="SourceGraphic" scale="4" xChannelSelector="R" yChannelSelector="G" />
            </filter>
            <clipPath v-for="r in regions" :id="`land-${r.id}`" :key="r.id">
              <path :d="r.land" />
            </clipPath>
          </defs>
          <g filter="url(#coast)">
            <g v-for="r in regions" :key="r.id" :transform="`translate(${r.x} ${r.y}) scale(.3333)`">
              <path :d="r.land" :fill="r.base" />
              <g :clip-path="`url(#land-${r.id})`" class="areas">
                <path v-for="(a, i) in r.areas" :key="i" :d="a[1]" :fill="a[0]" />
              </g>
              <path v-for="(a, i) in r.islands" :key="`i${i}`" :d="a[1]" :fill="a[0]" />
              <path v-if="r.borders" :d="r.borders" class="border" />
              <path v-if="r.water" :d="r.water" fill="#010e22" />
            </g>
          </g>
        </svg>

        <div class="controls">
          <button type="button" class="single" aria-label="Reset view">
            <svg viewBox="0 0 20 20"><path d="M1 10.5 10 2l9 8.500M4 9v9.500h4.500v-6h3v6H16V9" /></svg>
          </button>
          <div class="zoom">
            <button type="button" aria-label="Zoom in"><svg viewBox="0 0 20 20"><path d="M10 2v16M2 10h16" /></svg></button>
            <button type="button" aria-label="Zoom out"><svg viewBox="0 0 20 20"><path d="M2 10h16" /></svg></button>
          </div>
          <button type="button" class="single" aria-label="Full screen">
            <svg viewBox="0 0 20 20"><path d="M1 7V1h6M13 1h6v6M19 13v6h-6M7 19H1v-6" /></svg>
          </button>
        </div>

        <div class="panel legend">
          <h2>Electricity Generation Intensity</h2>
          <p>(kWh per capita)</p>
          <div class="ramp"></div>
          <div class="scale"><span v-for="s in scaleLabels" :key="s">{{ s }}</span></div>
          <div class="nodata"><i></i>No data</div>
        </div>

        <dl class="panel stats">
          <div>
            <svg viewBox="0 0 24 24" aria-hidden="true"><circle cx="12" cy="12" r="11" /><ellipse cx="12" cy="12" rx="5.5" ry="11" /><path d="M12 1v22M1 12h22M3.5 5.5c5 2 12 2 17 0M3.5 18.5c5-2 12-2 17 0" /></svg>
            <dt>World Average</dt>
            <dd><b>3.23</b>kWh/capita</dd>
          </div>
          <div>
            <svg viewBox="0 0 24 24" aria-hidden="true"><path d="M3 15 9 8l4.5 5L19 5.5M4 20v3M10 17v6M16 19v4M22 15v8" /><circle cx="20.5" cy="4" r="2.2" /></svg>
            <dt>Highest</dt>
            <dd><b>18.61</b>kWh/capita</dd>
          </div>
          <div>
            <svg viewBox="0 0 24 24" aria-hidden="true"><path d="M21 1c1 7 0 14-4 17.500s-9 3-12 .500c-3-3-3-8 1-11.500S17 4 21 1zM3.500 23c1-5 5-10 10-14" /></svg>
            <dt>Lowest</dt>
            <dd><b>0.01</b>kWh/capita</dd>
          </div>
        </dl>
      </section>
    </main>
  </div>
</template>

<style>
body {
  margin: 0;
  background: #000;
}
</style>

<style scoped>
* {
  box-sizing: border-box;
}

.app {
  --gold: #e9ae2d;
  --line: #7d5c1f;
  min-height: 100vh;
  padding: 16px 18px 38px 17px;
  border: 1px solid #323a46;
  border-radius: 24px;
  background: #010e22;
  color: #d5d5d8;
  font: 14px/20px Roboto, "Liberation Sans", sans-serif;
}

h1,
h2,
p,
dl,
dd {
  margin: 0;
}

button,
input,
select {
  margin: 0;
  padding: 0;
  font: inherit;
  color: inherit;
}

button {
  display: flex;
  align-items: center;
  justify-content: center;
  border: 1px solid var(--line);
  border-radius: 6px;
  background: #02132a;
}

svg {
  display: block;
  flex: none;
}

button svg,
.select svg,
.search svg,
.stats svg {
  fill: none;
  stroke: currentColor;
  stroke-width: 2;
  stroke-linecap: round;
  stroke-linejoin: round;
}

.panel {
  border: 1px solid var(--line);
  border-radius: 6px;
  background: #021226;
}

.header {
  display: flex;
  align-items: flex-start;
  height: 91px;
  padding-left: 8px;
}

.logo {
  width: 72px;
  height: 74px;
}

.heading {
  margin-left: 23px;
}

h1 {
  margin-top: 5px;
  color: var(--gold);
  font-size: 32px;
  font-weight: 500;
  line-height: 40px;
}

.heading p {
  margin-top: 6px;
  padding-left: 1px;
  color: #8d8d94;
  font-size: 16px;
}

.actions {
  display: flex;
  gap: 19px;
  margin: 11px 2px 0 auto;
  color: #f5b31f;
}

.actions button {
  width: 53px;
  height: 51px;
}

.actions svg {
  width: 28px;
  height: 28px;
}

.filters {
  display: grid;
  grid-template-columns: 877fr 608fr;
  gap: 14px;
}

.year-panel,
.fuel-panel {
  display: flex;
  align-items: flex-start;
  height: 84px;
}

.caption {
  color: var(--gold);
  font-size: 16px;
  font-weight: 500;
}

.year-panel .caption {
  width: 83px;
  margin: 20px 0 0 25px;
  font-size: 17px;
}

.year-value {
  width: 61px;
  margin-top: 27px;
  color: #ecd7a6;
  font-size: 15px;
}

.timeline {
  flex: 1;
  margin: 27px 28px 0 0;
}

.timeline input {
  display: block;
  width: 100%;
  height: 20px;
  appearance: none;
  background: transparent;
}

.timeline input::-webkit-slider-runnable-track {
  height: 6px;
  border-radius: 3px;
  background: linear-gradient(90deg, #d3a12e var(--fill), #1c2a3a var(--fill));
  box-shadow: 0 0 0 1px #4a3d26;
}

.timeline input::-webkit-slider-thumb {
  width: 19px;
  height: 19px;
  margin-top: -7px;
  border: 3px solid #dda82c;
  border-radius: 50%;
  appearance: none;
  background: #b5892a;
}

.ticks {
  display: grid;
  grid-template-columns: 83fr 83fr 83fr 81fr 79fr 79fr 79fr 71fr auto;
  margin: 4px 0 0 15px;
  font-size: 12px;
}

.ticks span {
  width: 0;
}

.ticks span:last-child {
  width: auto;
}

.ticks .current {
  color: var(--gold);
  font-weight: 500;
}

.fuel-panel .caption {
  width: 102px;
  margin: 24px 0 0 18px;
}

.select {
  position: relative;
  border: 1px solid #9c7322;
  border-radius: 6px;
  background: #011023;
  color: #f0f0f2;
}

.select select {
  width: 100%;
  height: 100%;
  padding: 0 14px;
  border: 0;
  appearance: none;
  background: transparent;
}

.select svg {
  position: absolute;
  top: calc(50% - 8px);
  right: 12px;
  width: 16px;
  height: 16px;
  pointer-events: none;
}

.fuel-select {
  width: 220px;
  height: 38px;
  margin-top: 20px;
  font-size: 15px;
}

.about {
  gap: 12px;
  width: 158px;
  height: 40px;
  margin: 22px 14px 0 auto;
  color: var(--gold);
  font-size: 12px;
  font-weight: 500;
}

.about svg {
  width: 14px;
  height: 18px;
  stroke-width: 1;
}

.content {
  display: grid;
  grid-template-columns: 295px 1fr;
  gap: 14px;
  margin-top: 14px;
}

.sidebar {
  display: flex;
  flex-direction: column;
  height: 779px;
}

.tabs {
  display: flex;
  height: 44px;
  padding-left: 12px;
  border-bottom: 1px solid #1f2a3a;
  font-size: 15px;
}

.tabs button {
  flex: 1;
  height: 43px;
  padding-top: 7px;
  border: 0;
  border-bottom: 2px solid transparent;
  border-radius: 0;
  background: none;
  color: #83858c;
}

.tabs button:first-child {
  flex: 0 0 127px;
}

.tabs .active {
  border-color: #cc9723;
  color: var(--gold);
  font-weight: 500;
}

.tools {
  height: 116px;
  padding: 12px 13px 0 12px;
}

.search {
  display: flex;
  align-items: center;
  height: 35px;
  padding-left: 11px;
  border: 1px solid #343e4d;
  border-radius: 6px;
}

.search svg {
  width: 18px;
  height: 18px;
  stroke-width: 1.5;
}

.search input {
  flex: 1;
  min-width: 0;
  margin-left: 9px;
  border: 0;
  outline: 0;
  appearance: none;
  background: transparent;
}

.search input::placeholder {
  color: #74777e;
}

.sort-label {
  display: block;
  margin: 7px 0 2px 1px;
  color: #c89224;
  font-size: 11px;
  line-height: 16px;
}

.sort-select {
  height: 32px;
  font-size: 13px;
}

.sort-select select {
  padding-left: 12px;
}

.sort-select svg,
.fuel-select svg {
  stroke-width: 1.5;
}

.list {
  display: flex;
  height: 567px;
  border-top: 1px solid #343026;
  border-bottom: 1px solid var(--line);
}

table {
  flex: 1;
  height: 559px;
  border-collapse: collapse;
}

tr {
  height: 31px;
  border-bottom: 1px solid #17222f;
}

th,
td {
  padding: 0;
}

th {
  padding-top: 2px;
  font-weight: 400;
  text-align: left;
}

.key {
  width: 45px;
  padding-left: 12px;
}

.key i {
  display: block;
  width: 20px;
  height: 20px;
}

.num {
  padding: 2px 12px 0 0;
  text-align: right;
}

.scrollbar {
  width: 14px;
  padding: 4px;
  border: 1px solid #343c46;
  border-radius: 4px;
  background: #1a2531;
}

.scrollbar i {
  display: block;
  width: 6px;
  height: 216px;
  margin-left: -1px;
  border-radius: 3px;
  background: #5c616a;
}

.pager {
  display: flex;
  flex: 1;
  align-items: center;
  padding: 0 13px 0 17px;
  color: #83858a;
  font-size: 13px;
}

.pager button {
  width: 32px;
  height: 31px;
  margin-left: 4px;
  border-color: #4a4436;
  color: #e2c58a;
}

.pager button:disabled {
  margin-left: auto;
  color: #5c5d5e;
}

.pager svg {
  width: 12px;
  height: 12px;
  stroke-width: 1.5;
}

.stage {
  position: relative;
  min-height: 779px;
}

.map {
  width: 100%;
}

.areas path,
.border {
  stroke: #115c64;
  stroke-opacity: .65;
  stroke-width: 2;
}

.border {
  fill: none;
}

.controls {
  position: absolute;
  top: 8px;
  left: 8px;
  width: 42px;
}

.controls button {
  width: 100%;
  height: 42px;
}

.controls svg {
  width: 20px;
  height: 20px;
  stroke-width: 1.5;
}

.controls .zoom {
  margin-top: 7px;
  border: 1px solid var(--line);
  border-radius: 6px;
}

.controls .zoom button {
  border: 0;
}

.controls .zoom button + button {
  height: 41px;
  border-top: 1px solid var(--line);
  border-radius: 0 0 6px 6px;
}

.legend {
  position: absolute;
  bottom: 0;
  left: 7px;
  width: 378px;
  height: 159px;
  padding: 13px 10px 0 18px;
  background: #010d1c;
}

h2 {
  font-size: 18px;
  font-weight: 500;
  line-height: 24px;
}

.legend p {
  line-height: 22px;
}

.ramp {
  width: 333px;
  height: 20px;
  margin-top: 5px;
  border: 1px solid #23777a;
  border-radius: 6px;
  background: linear-gradient(90deg, #84ffe8, #5fdccc 20%, #3cbab1 40%, #1f918f 57%, #0a5e64 76%, #053b45);
}

.scale {
  display: grid;
  grid-template-columns: 53fr 55fr 50fr 50fr 48fr 48fr 44fr;
  margin-top: 6px;
  color: #a9a9ad;
  font-size: 12px;
}

.scale span {
  width: 0;
}

.nodata {
  display: flex;
  gap: 10px;
  align-items: center;
  margin-top: 12px;
  color: #b3b3b7;
}

.nodata i {
  width: 20px;
  height: 20px;
  background: #323843;
}

.stats {
  position: absolute;
  right: 0;
  bottom: 0;
  width: 347px;
  color: #c9b083;
}

.stats div {
  display: flex;
  align-items: center;
  height: 52px;
  padding: 4px 20px 0 19px;
}

.stats div + div {
  border-top: 1px solid var(--line);
}

.stats svg {
  width: 24px;
  height: 24px;
  margin: -4px 21px 0 0;
  color: var(--gold);
  stroke-width: 1.5;
}

.stats dd {
  margin-left: auto;
}

.stats b {
  margin-right: 9px;
  color: #f0ece6;
  font-size: 16px;
  font-weight: 400;
}
</style>
